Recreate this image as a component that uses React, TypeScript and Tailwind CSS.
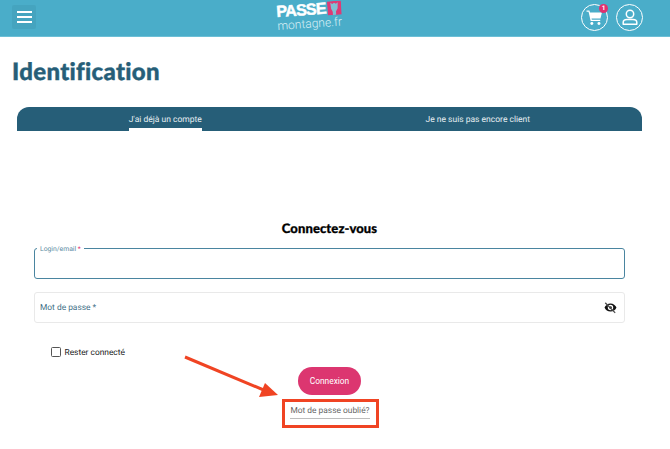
import React from "react";

const roboto = "font-['Roboto',sans-serif]";

function Header() {
  return (
    <header className="h-[37px] bg-[#4aadc9] border-b border-b-[#6cbfd6] flex items-start justify-between pl-3 pr-[27px] relative">
      <button className="mt-[5px] w-6 h-6 bg-[#45a4bf] rounded-[2px] flex flex-col items-center justify-center gap-[3px]">
        <span className="block w-[15px] h-[2px] bg-white" />
        <span className="block w-[15px] h-[2px] bg-white" />
        <span className="block w-[15px] h-[2px] bg-white" />
      </button>
      <div className="absolute left-[277px] top-[6px] w-[66px] h-[27px] -rotate-[4deg] origin-left flex flex-col">
        <div className="flex items-center h-[14px]">
          <span className="font-['Liberation_Sans',sans-serif] font-bold text-white text-[16px] leading-[14px] tracking-[-0.7px] [-webkit-text-stroke:0.5px_white]">PASSE</span>
          <svg width="14" height="14" viewBox="0 0 15 15" className="ml-[1px] -mt-[2px]">
            <rect x="0" y="0" width="15" height="15" fill="#de3a75" />
            <path d="M3.500 1.500 L5.500 3 L7.500 2 L9.500 3 L11.500 1.500 L11 8 L9 11.500 L9 15 L5.500 15 L5.500 11.500 L4 8 Z" fill="#7fc0d4" />
          </svg>
        </div>
        <div className={`${roboto} text-[#d9eff5] text-[12px] leading-[13px] font-light whitespace-nowrap`}>montagne.fr</div>
      </div>
      <div className="mt-[4px] flex items-center gap-[8px]">
        <div className="relative w-[27px] h-[27px] rounded-full border-[1.5px] border-white flex items-center justify-center">
          <svg width="17" height="17" viewBox="0 0 16 16" fill="white">
            <path d="M0.500 1.500 H3.200 L3.800 3.200 H15 L13.600 9 H5.200 L5.500 10.200 H13.400 V11.400 H4.400 L2.400 2.700 H0.500 Z" />
            <circle cx="5.500" cy="13.600" r="1.400" />
            <circle cx="12.200" cy="13.600" r="1.400" />
          </svg>
          <span className={`absolute -top-[1px] -right-[1px] w-[9px] h-[9px] rounded-full bg-[#e0316f] text-white text-[6.5px] leading-[9px] text-center font-bold ${roboto}`}>1</span>
        </div>
        <div className="w-[27px] h-[27px] rounded-full border-[1.5px] border-white flex items-center justify-center">
          <svg width="16" height="17" viewBox="0 0 16 17" fill="none" stroke="white" strokeWidth="1.500">
            <circle cx="8" cy="5" r="3.700" />
            <path d="M1.200 15.200 V13.600 C1.200 11.600 3 10.600 5 10.600 H11 C13 10.600 14.800 11.600 14.800 13.600 V15.200 Z" strokeLinejoin="round" />
          </svg>
        </div>
      </div>
    </header>
  );
}

function Tabs() {
  return (
    <div className={`ml-[17px] mr-[28px] h-[24px] bg-[#265e78] rounded-t-[12px] grid grid-cols-2 text-[8.500px] text-[#e6eef2] ${roboto}`}>
      <div className="flex justify-center pr-[16px]">
        <div className="h-[24px] pt-[7px] leading-[12px] border-b-[3px] border-b-white">J'ai déjà un compte</div>
      </div>
      <div className="flex justify-center pr-[16px]">
        <div className="pt-[7px] leading-[12px]">Je ne suis pas encore client</div>
      </div>
    </div>
  );
}

function Form() {
  return (
    <div className="ml-[34px] mr-[45px] mt-[89px] flex flex-col">
      <h2 className="h-[17px] text-center font-['Lato',sans-serif] font-black text-[13px] leading-[17px] tracking-[0.1px] text-black [-webkit-text-stroke:0.3px_black]">Connectez-vous</h2>

      <div className="relative mt-[11px] h-[31px] rounded-[3px] border-[1.5px] border-[#4a85a0]">
        <span className={`absolute left-[2px] -top-[4px] bg-white px-[3px] text-[6.800px] leading-[8px] text-[#5b8ba3] ${roboto}`}>
          Login/email <span className="text-[#e0316f]">*</span>
        </span>
      </div>

      <div className="mt-[13px] h-[31px] rounded-[3px] border border-[#e9e9e9] flex items-center justify-between pl-[5px] pr-[7px]">
        <span className={`mt-[1px] text-[8.400px] leading-[12px] text-[#3f7188] ${roboto}`}>Mot de passe *</span>
        <svg width="13" height="13" viewBox="0 0 24 24" fill="#111">
          <path d="M12 4.500C7 4.500 2.700 7.600 1 12c1.700 4.400 6 7.500 11 7.500s9.300-3.100 11-7.500c-1.700-4.400-6-7.500-11-7.500zm0 12.500a5 5 0 1 1 0-10 5 5 0 0 1 0 10z" />
          <circle cx="12" cy="12" r="2.400" />
          <path d="M3 2.500 L21.500 21 L20 22.500 L1.500 4 Z" stroke="white" strokeWidth="0.600" />
        </svg>
      </div>

      <label className="mt-[24px] ml-[17px] h-[10px] flex items-center gap-[4px]">
        <span className="block w-[9.500px] h-[9.500px] rounded-[1.500px] border border-[#555] bg-white" />
        <span className={`mt-[1px] text-[8.400px] leading-[10px] text-[#222] ${roboto}`}>Rester connecté</span>
      </label>

      <div className="flex flex-col items-center mt-[10px]">
        <button className={`w-[63px] h-[28px] rounded-full bg-[#dc3670] text-white text-[8.400px] ${roboto}`}>Connexion</button>
        <div className="mt-[4px] ml-[1px] w-[97px] h-[29px] border-[3px] border-[#f04423] flex items-start justify-center pt-[3px]">
          <span className={`h-[14px] border-b-[1.500px] border-b-[#bdbdbd] text-[8.400px] leading-[12px] text-[#666] whitespace-nowrap ${roboto}`}>Mot de passe oublié?</span>
        </div>
      </div>
    </div>
  );
}

export default function App() {
  return (
    <div className="relative w-[670px] h-[449px] bg-white overflow-hidden [text-rendering:geometricPrecision]">
      <Header />
      <h1 className="mt-[19px] ml-[12px] h-[31px] font-['Lato',sans-serif] font-black text-[24px] leading-[31px] tracking-[0.3px] text-[#265e78] [-webkit-text-stroke:0.4px_#265e78]">Identification</h1>
      <div className="mt-[20px]">
        <Tabs />
        <Form />
      </div>
      <svg className="absolute left-[180px] top-[350px]" width="105" height="52" viewBox="0 0 105 52">
        <path d="M5 7 L86 41" stroke="#f04423" strokeWidth="3" fill="none" />
        <path d="M85 33 L98 45 L79 47 Z" fill="#f04423" />
      </svg>
    </div>
  );
}
